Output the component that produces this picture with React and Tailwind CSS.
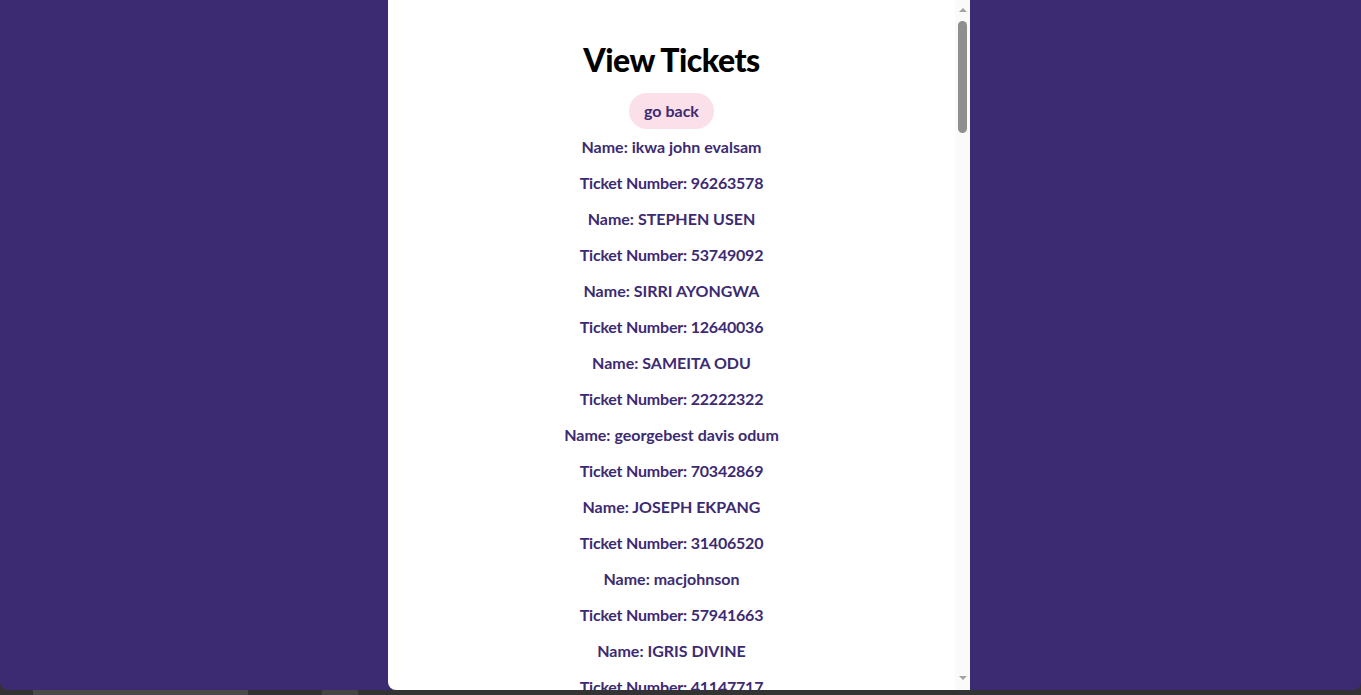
import React from 'react';

const tickets = [
  { name: 'ikwa john evalsam', number: '96263578' },
  { name: 'STEPHEN USEN', number: '53749092' },
  { name: 'SIRRI AYONGWA', number: '12640036' },
  { name: 'SAMEITA ODU', number: '22222322' },
  { name: 'georgebest davis odum', number: '70342869' },
  { name: 'JOSEPH EKPANG', number: '31406520' },
  { name: 'macjohnson', number: '57941663' },
  { name: 'IGRIS DIVINE', number: '41147717' },
];

function App() {
  return (
    <div className="w-[1361px] h-[695px] bg-[#333333] flex flex-col overflow-hidden font-['Lato','Inter',sans-serif]">
      {/* window area */}
      <div className="h-[690px] shrink-0 bg-[#3c2a72] rounded-b-lg flex pl-[388px]">
        {/* card */}
        <div className="w-[582px] h-[690px] bg-white rounded-bl-lg flex overflow-hidden">
          <div className="flex-1 overflow-hidden flex flex-col items-center pt-[40px]">
            <h1 className="shrink-0 text-[32px] leading-[40px] font-black text-black tracking-[-0.5px]">View Tickets</h1>
            <button className="shrink-0 mt-[13px] h-[36px] px-[15px] rounded-full bg-[#fce0e9] text-[#3c2a72] text-[16px] font-bold">
              go back
            </button>
            <div className="shrink-0 mt-[8px] flex flex-col items-center gap-[16px]">
              {tickets.map((t) => (
                <React.Fragment key={t.number}>
                  <p className="text-[16px] leading-[20px] font-bold text-[#3c2a72]">Name: {t.name}</p>
                  <p className="text-[16px] leading-[20px] font-bold text-[#3c2a72] tracking-[-0.2px]">Ticket Number: {t.number}</p>
                </React.Fragment>
              ))}
            </div>
          </div>
          {/* scrollbar */}
          <div className="w-[15px] shrink-0 bg-[#fafafa] flex flex-col items-center">
            <div className="mt-[8px] w-0 h-0 border-x-[4px] border-x-transparent border-b-[4px] border-b-[#a3a3a3]" />
            <div className="mt-[9px] w-[9px] h-[112px] rounded-full bg-[#8f8f8f]" />
            <div className="mt-auto mb-[10px] w-0 h-0 border-x-[4px] border-x-transparent border-t-[4px] border-t-[#a3a3a3]" />
          </div>
        </div>
      </div>
      {/* taskbar edge */}
      <div className="flex-1 flex">
        <div className="w-[33px]" />
        <div className="w-[215px] bg-[#4a4a4a]" />
        <div className="w-[74px]" />
        <div className="w-[36px] bg-[#454545]" />
      </div>
    </div>
  );
}

export default App;
